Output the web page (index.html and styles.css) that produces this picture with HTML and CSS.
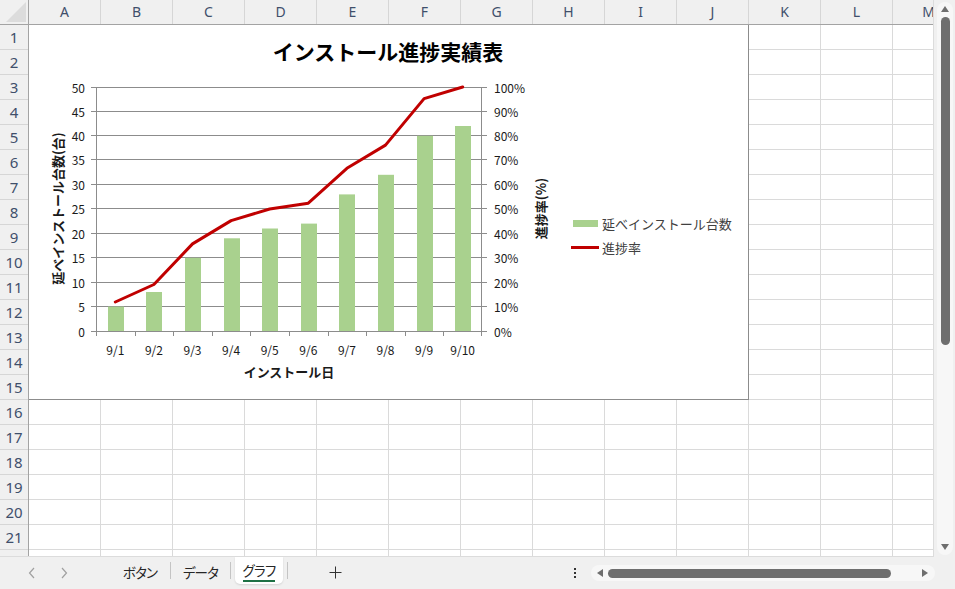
FILE: index.html
```html
<!DOCTYPE html>
<html lang="ja">
<head>
<meta charset="utf-8">
<title>インストール進捗実績表</title>
<link rel="stylesheet" href="styles.css">
</head>
<body>
<div class="app">
  <div class="main">
    <div class="sheet">
      <div class="corner"><span class="corner-tri"></span></div>
      <div class="colheads">
        <div class="ch">A</div><div class="ch">B</div><div class="ch">C</div><div class="ch">D</div>
        <div class="ch">E</div><div class="ch">F</div><div class="ch">G</div><div class="ch">H</div>
        <div class="ch">I</div><div class="ch">J</div><div class="ch">K</div><div class="ch">L</div>
        <div class="ch">M</div>
      </div>
      <div class="rowheads">
        <div class="rh">1</div><div class="rh">2</div><div class="rh">3</div><div class="rh">4</div>
        <div class="rh">5</div><div class="rh">6</div><div class="rh">7</div><div class="rh">8</div>
        <div class="rh">9</div><div class="rh">10</div><div class="rh">11</div><div class="rh">12</div>
        <div class="rh">13</div><div class="rh">14</div><div class="rh">15</div><div class="rh">16</div>
        <div class="rh">17</div><div class="rh">18</div><div class="rh">19</div><div class="rh">20</div>
        <div class="rh">21</div><div class="rh">22</div>
      </div>
      <div class="cells">
        <div class="chart">
          <svg class="chart-svg" width="719" height="374" viewBox="29 25 719 374" xmlns="http://www.w3.org/2000/svg">
            <text class="title" x="388" y="51">インストール進捗実績表</text>
            <g class="grid">
              <line x1="96" y1="87.5" x2="482" y2="87.5"/>
              <line x1="96" y1="111.5" x2="482" y2="111.5"/>
              <line x1="96" y1="135.5" x2="482" y2="135.5"/>
              <line x1="96" y1="159.5" x2="482" y2="159.5"/>
              <line x1="96" y1="184.5" x2="482" y2="184.5"/>
              <line x1="96" y1="208.5" x2="482" y2="208.5"/>
              <line x1="96" y1="233.5" x2="482" y2="233.5"/>
              <line x1="96" y1="257.5" x2="482" y2="257.5"/>
              <line x1="96" y1="282.5" x2="482" y2="282.5"/>
              <line x1="96" y1="306.5" x2="482" y2="306.5"/>
            </g>
            <g class="bars">
              <rect x="108" y="306.6" width="16" height="24.4"/>
              <rect x="146" y="292" width="16" height="39"/>
              <rect x="185" y="257.8" width="16" height="73.2"/>
              <rect x="224" y="238.3" width="16" height="92.7"/>
              <rect x="262" y="228.5" width="16" height="102.5"/>
              <rect x="301" y="223.6" width="16" height="107.4"/>
              <rect x="339" y="194.4" width="16" height="136.6"/>
              <rect x="378" y="174.8" width="16" height="156.2"/>
              <rect x="417" y="135.8" width="16" height="195.2"/>
              <rect x="455" y="126" width="16" height="205"/>
            </g>
            <g class="axis">
              <line x1="96.5" y1="87" x2="96.5" y2="331"/>
              <line x1="481.5" y1="87" x2="481.5" y2="331"/>
              <line x1="96" y1="331.5" x2="482" y2="331.5"/>
              <line x1="91" y1="87.5" x2="96" y2="87.5"/>
              <line x1="91" y1="111.5" x2="96" y2="111.5"/>
              <line x1="91" y1="135.5" x2="96" y2="135.5"/>
              <line x1="91" y1="159.5" x2="96" y2="159.5"/>
              <line x1="91" y1="184.5" x2="96" y2="184.5"/>
              <line x1="91" y1="208.5" x2="96" y2="208.5"/>
              <line x1="91" y1="233.5" x2="96" y2="233.5"/>
              <line x1="91" y1="257.5" x2="96" y2="257.5"/>
              <line x1="91" y1="282.5" x2="96" y2="282.5"/>
              <line x1="91" y1="306.5" x2="96" y2="306.5"/>
              <line x1="91" y1="331.5" x2="96" y2="331.5"/>
              <line x1="482" y1="87.5" x2="487" y2="87.5"/>
              <line x1="482" y1="111.5" x2="487" y2="111.5"/>
              <line x1="482" y1="135.5" x2="487" y2="135.5"/>
              <line x1="482" y1="159.5" x2="487" y2="159.5"/>
              <line x1="482" y1="184.5" x2="487" y2="184.5"/>
              <line x1="482" y1="208.5" x2="487" y2="208.5"/>
              <line x1="482" y1="233.5" x2="487" y2="233.5"/>
              <line x1="482" y1="257.5" x2="487" y2="257.5"/>
              <line x1="482" y1="282.5" x2="487" y2="282.5"/>
              <line x1="482" y1="306.5" x2="487" y2="306.5"/>
              <line x1="482" y1="331.5" x2="487" y2="331.5"/>
              <line x1="96.5" y1="331" x2="96.5" y2="336"/>
              <line x1="135.5" y1="331" x2="135.5" y2="336"/>
              <line x1="173.5" y1="331" x2="173.5" y2="336"/>
              <line x1="212.5" y1="331" x2="212.5" y2="336"/>
              <line x1="250.5" y1="331" x2="250.5" y2="336"/>
              <line x1="289.5" y1="331" x2="289.5" y2="336"/>
              <line x1="328.5" y1="331" x2="328.5" y2="336"/>
              <line x1="366.5" y1="331" x2="366.5" y2="336"/>
              <line x1="405.5" y1="331" x2="405.5" y2="336"/>
              <line x1="443.5" y1="331" x2="443.5" y2="336"/>
              <line x1="481.5" y1="331" x2="481.5" y2="336"/>
            </g>
            <polyline class="rate" points="115.3,302 153.9,284.5 192.5,243.9 231.1,220.6 269.7,209 308.3,203.2 346.9,168.3 385.5,145.1 424.1,98.6 462.7,87"/>
            <g class="ylab">
              <text x="85" y="87.5">50</text>
              <text x="85" y="111.5">45</text>
              <text x="85" y="135.5">40</text>
              <text x="85" y="159.5">35</text>
              <text x="85" y="184.5">30</text>
              <text x="85" y="208.5">25</text>
              <text x="85" y="233.5">20</text>
              <text x="85" y="257.5">15</text>
              <text x="85" y="282.5">10</text>
              <text x="85" y="306.5">5</text>
              <text x="85" y="331.5">0</text>
            </g>
            <g class="y2lab">
              <text x="494" y="87.5">100%</text>
              <text x="494" y="111.5">90%</text>
              <text x="494" y="135.5">80%</text>
              <text x="494" y="159.5">70%</text>
              <text x="494" y="184.5">60%</text>
              <text x="494" y="208.5">50%</text>
              <text x="494" y="233.5">40%</text>
              <text x="494" y="257.5">30%</text>
              <text x="494" y="282.5">20%</text>
              <text x="494" y="306.5">10%</text>
              <text x="494" y="331.5">0%</text>
            </g>
            <g class="xlab">
              <text x="115.3" y="349">9/1</text>
              <text x="153.9" y="349">9/2</text>
              <text x="192.5" y="349">9/3</text>
              <text x="231.1" y="349">9/4</text>
              <text x="269.7" y="349">9/5</text>
              <text x="308.3" y="349">9/6</text>
              <text x="346.9" y="349">9/7</text>
              <text x="385.5" y="349">9/8</text>
              <text x="424.1" y="349">9/9</text>
              <text x="462.7" y="349">9/10</text>
            </g>
            <text class="atitle" x="289" y="371">インストール日</text>
            <text class="atitle" x="57" y="208.5" transform="rotate(-90 57 208.5)">延べインストール台数(台)</text>
            <text class="atitle" x="540" y="208.5" transform="rotate(-90 540 208.5)">進捗率(%)</text>
            <rect class="lg-bar" x="573" y="220" width="25" height="7"/>
            <line class="lg-line" x1="571" y1="247.5" x2="599" y2="247.5"/>
            <text class="lgtext" x="602" y="223.5">延べインストール台数</text>
            <text class="lgtext" x="602" y="247.5">進捗率</text>
          </svg>
        </div>
      </div>
    </div>
    <div class="vscroll">
      <div class="vtrack">
        <svg class="varrow" width="10" height="8" viewBox="0 0 10 8"><path d="M1 7 L5 1 L9 7 Z"/></svg>
        <div class="vthumb"></div>
        <div class="vspace"></div>
        <svg class="varrow" width="10" height="8" viewBox="0 0 10 8"><path d="M1 1 L9 1 L5 7 Z"/></svg>
      </div>
    </div>
  </div>
  <div class="tabbar">
    <div class="navs">
      <svg class="nav" width="8" height="12" viewBox="0 0 8 12"><path d="M6 1 L1.5 6 L6 11"/></svg>
      <svg class="nav" width="8" height="12" viewBox="0 0 8 12"><path d="M2 1 L6.5 6 L2 11"/></svg>
    </div>
    <div class="tabs">
      <div class="tab">ボタン</div>
      <div class="sep"></div>
      <div class="tab tab-2">データ</div>
      <div class="sep"></div>
      <div class="tab active"><span class="tab-label">グラフ</span></div>
      <div class="sep"></div>
    </div>
    <svg class="plus" width="13" height="13" viewBox="0 0 13 13"><path d="M6.5 0.5 V12.5 M0.5 6.5 H12.5"/></svg>
    <div class="dots"><span></span><span></span><span></span></div>
    <div class="htrack">
      <svg class="harrow" width="8" height="10" viewBox="0 0 8 10"><path d="M7 1 L7 9 L1 5 Z"/></svg>
      <div class="hthumb"></div>
      <svg class="harrow" width="8" height="10" viewBox="0 0 8 10"><path d="M1 1 L7 5 L1 9 Z"/></svg>
    </div>
  </div>
</div>
</body>
</html>
```
FILE: styles.css
```css
* { box-sizing: border-box; }
html, body { margin: 0; padding: 0; }
body {
  width: 955px;
  height: 589px;
  overflow: hidden;
  background: #f0f0f0;
  font-family: "Noto Sans", "Noto Sans CJK JP", sans-serif;
}
.app {
  display: flex;
  flex-direction: column;
  width: 955px;
  height: 589px;
}
.main {
  display: flex;
  height: 557px;
}
.sheet {
  width: 934px;
  height: 557px;
  overflow: hidden;
  display: grid;
  grid-template-columns: 29px 1fr;
  grid-template-rows: 25px 1fr;
  background: #fff;
  border-right: 1px solid #dcdcdc;
  border-bottom: 1px solid #dcdcdc;
}
.corner {
  background: #f0f0f0;
  border-right: 1px solid #a3a3a3;
  border-bottom: 1px solid #a3a3a3;
  position: relative;
}
.corner-tri {
  position: absolute;
  right: 2px;
  bottom: 2px;
  width: 20px;
  height: 20px;
  background: #dcdcdc;
  clip-path: polygon(100% 0, 100% 100%, 0 100%);
}
.colheads {
  display: flex;
  background: #f0f0f0;
  border-bottom: 1px solid #a3a3a3;
  overflow: hidden;
}
.ch {
  flex: 0 0 72px;
  border-right: 1px solid #d6d6d6;
  text-align: center;
  font-size: 14px;
  line-height: 24px;
  color: #3f4f6b;
}
.rowheads {
  display: flex;
  flex-direction: column;
  background: #f0f0f0;
  border-right: 1px solid #a3a3a3;
  overflow: hidden;
}
.rh {
  flex: 0 0 25px;
  border-bottom: 1px solid #d6d6d6;
  text-align: center;
  font-size: 15px;
  line-height: 24px;
  color: #3f4f6b;
}
.cells {
  position: relative;
  background-color: #fff;
  background-image:
    repeating-linear-gradient(to right, transparent 0 71px, #dadada 71px 72px),
    repeating-linear-gradient(to bottom, transparent 0 24px, #dadada 24px 25px);
}
.chart {
  position: absolute;
  left: 0;
  top: 0;
  width: 720px;
  height: 375px;
  background: #fff;
  border-right: 1px solid #8c8c8c;
  border-bottom: 1px solid #8c8c8c;
}
.chart-svg {
  display: block;
  font-family: "Noto Sans CJK JP", sans-serif;
}
.title {
  font-size: 21px;
  font-weight: 700;
  fill: #000;
  text-anchor: middle;
  dominant-baseline: central;
}
.grid line, .axis line {
  stroke: #8c8c8c;
  stroke-width: 1;
}
.bars rect { fill: #a9d18e; }
.rate {
  fill: none;
  stroke: #c00000;
  stroke-width: 3;
  stroke-linejoin: round;
  stroke-linecap: round;
}
.ylab text, .y2lab text, .xlab text {
  font-size: 12px;
  fill: #1a1a1a;
  dominant-baseline: central;
}
.ylab text { text-anchor: end; }
.y2lab text { text-anchor: start; }
.xlab text { text-anchor: middle; }
.atitle {
  font-size: 13px;
  font-weight: 700;
  fill: #1a1a1a;
  text-anchor: middle;
  dominant-baseline: central;
}
.lg-bar { fill: #a9d18e; }
.lg-line { stroke: #c00000; stroke-width: 3; }
.lgtext {
  font-size: 13px;
  fill: #404040;
  dominant-baseline: central;
}
.vscroll {
  width: 21px;
  height: 557px;
  padding: 2px 2px 2px 3px;
}
.vtrack {
  height: 100%;
  background: #f7f7f7;
  border-radius: 8px;
  display: flex;
  flex-direction: column;
  align-items: center;
  padding: 3px 0 4px;
}
.varrow path { fill: #6e6e6e; }
.vthumb {
  width: 9px;
  height: 328px;
  margin-top: 4px;
  background: #6e6e6e;
  border-radius: 5px;
}
.vspace { flex: 1; }
.tabbar {
  height: 32px;
  display: flex;
  align-items: flex-start;
  background: #f0f0f0;
}
.navs {
  display: flex;
  gap: 24px;
  margin: 10px 0 0 28px;
}
.nav path {
  fill: none;
  stroke: #a0a0a0;
  stroke-width: 1.2;
}
.tabs {
  display: flex;
  align-items: flex-start;
  margin-left: 42px;
}
.tab {
  width: 60px;
  height: 27px;
  text-align: center;
  font-family: "Noto Sans CJK JP", sans-serif;
  font-feature-settings: "palt";
  font-size: 13.5px;
  letter-spacing: -0.8px;
  line-height: 30px;
  color: #262626;
}
.tab-2 { width: 59px; }
.sep {
  width: 1px;
  height: 17px;
  margin-top: 5px;
  background: #c4c4c4;
}
.tab.active {
  width: 48px;
  margin: 0 4px;
  background: #fff;
  border-radius: 0 0 5px 5px;
  box-shadow: 0 1px 2px rgba(0,0,0,0.12);
  line-height: 26px;
}
.tab-label {
  display: inline-block;
  border-bottom: 2px solid #1e7145;
  line-height: 20px;
}
.plus {
  margin: 9px 0 0 41px;
}
.plus path {
  stroke: #333;
  stroke-width: 1;
  fill: none;
}
.dots {
  display: flex;
  flex-direction: column;
  gap: 2px;
  margin: 11px 0 0 232px;
}
.dots span {
  width: 2px;
  height: 2px;
  background: #333;
}
.htrack {
  display: flex;
  align-items: center;
  width: 344px;
  height: 16px;
  margin: 8px 0 0 15px;
  padding: 0 6px 0 5px;
  background: #f7f7f7;
  border-radius: 8px;
}
.harrow path { fill: #6e6e6e; }
.hthumb {
  width: 283px;
  height: 9px;
  margin: 0 auto 0 4px;
  background: #6e6e6e;
  border-radius: 5px;
}
```
